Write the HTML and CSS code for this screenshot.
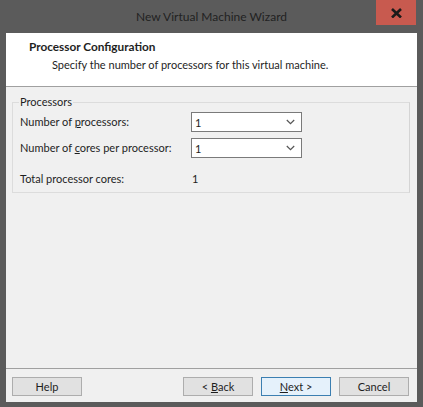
FILE: index.html
```html
<!DOCTYPE html>
<html>
<head>
<meta charset="utf-8">
<link rel="stylesheet" href="styles.css">
</head>
<body>
<div class="window">
  <div class="titlebar">
    <div class="title">New Virtual Machine Wizard</div>
    <div class="close">
      <svg width="13" height="10" viewBox="0 0 13 10"><path d="M2 1 L11 9.5 M11 1 L2 9.5" stroke="#1a1a1a" stroke-width="2.6" stroke-linecap="butt"/></svg>
    </div>
  </div>
  <div class="client">
    <div class="header">
      <div class="h-title">Processor Configuration</div>
      <div class="h-sub">Specify the number of processors for this virtual machine.</div>
    </div>
    <div class="main">
      <fieldset class="group">
        <legend>Processors</legend>
        <div class="grid">
          <div class="label">Number of <u>p</u>rocessors:</div>
          <div class="select"><span>1</span><svg width="9" height="6" viewBox="0 0 9 6"><path d="M0.8 1 L4.5 4.7 L8.2 1" fill="none" stroke="#555" stroke-width="1.2"/></svg></div>
          <div class="label">Number of <u>c</u>ores per processor:</div>
          <div class="select"><span>1</span><svg width="9" height="6" viewBox="0 0 9 6"><path d="M0.8 1 L4.5 4.7 L8.2 1" fill="none" stroke="#555" stroke-width="1.2"/></svg></div>
          <div class="label total">Total processor cores:</div>
          <div class="value total">1</div>
        </div>
      </fieldset>
    </div>
    <div class="footer">
      <button class="btn">Help</button>
      <div class="spacer"></div>
      <button class="btn">&lt; <u>B</u>ack</button>
      <button class="btn primary"><u>N</u>ext &gt;</button>
      <button class="btn">Cancel</button>
    </div>
  </div>
</div>
</body>
</html>
```

FILE: styles.css
```css
* { box-sizing: border-box; }
html, body { margin: 0; padding: 0; }
body {
  width: 423px;
  height: 407px;
  background: #5b5b5b;
  font-family: "Lato", "Noto Sans", sans-serif;
  font-size: 11px;
  color: #1e1e1e;
  overflow: hidden;
}
.window {
  display: flex;
  flex-direction: column;
  height: 407px;
  padding: 0 6px 5px 6px;
}
.titlebar {
  height: 33px;
  position: relative;
  display: flex;
  justify-content: center;
  align-items: center;
}
.title {
  font-size: 12px;
  color: #222222;
  margin-top: -1px;
}
.close {
  position: absolute;
  right: 1px;
  top: 0;
  width: 40px;
  height: 25px;
  background: #c85a4f;
  display: flex;
  align-items: center;
  justify-content: center;
}
.client {
  flex: 1;
  display: flex;
  flex-direction: column;
  background: #f0f0f0;
}
.header {
  height: 54px;
  background: #ffffff;
  border-bottom: 1px solid #a0a0a0;
  padding: 6px 0 0 23px;
}
.h-title {
  font-weight: bold;
  font-size: 11.8px;
  line-height: 16px;
}
.h-sub {
  padding-left: 23px;
  line-height: 16px;
  margin-top: 2px;
}
.main {
  flex: 1;
  padding: 8px 7px 0 6px;
}
.group {
  margin: 0;
  border: 1px solid #dcdcdc;
  border-right-color: #d4d4d4;
  padding: 3px 0 9px 7px;
  height: 98px;
}
.group legend {
  padding: 0 1px;
  margin-left: -1px;
  line-height: 14px;
}
.grid {
  display: grid;
  grid-template-columns: 171px 111px;
  grid-template-rows: 20px 20px 24px;
  row-gap: 6px;
  align-items: center;
}
.label { line-height: 14px; }
.select {
  height: 20px;
  background: #fff;
  border: 1px solid #7a7a7a;
  display: flex;
  align-items: center;
  justify-content: space-between;
  padding: 0 6px 0 3px;
}
.total { align-self: end; line-height: 18px; }
.value { padding-left: 1px; }
.footer {
  height: 34px;
  border-top: 1px solid #a0a0a0;
  display: flex;
  align-items: flex-start;
  padding: 8px 8px 0 6px;
  gap: 8px;
}
.spacer { flex: 1; }
.btn {
  width: 70px;
  height: 19px;
  background: #e1e1e1;
  border: 1px solid #adadad;
  font-family: inherit;
  font-size: 11px;
  color: #1e1e1e;
  padding: 0;
  margin: 0;
}
.btn.primary {
  background: #e5f1fb;
  border-color: #3c7fb1;
}
```
